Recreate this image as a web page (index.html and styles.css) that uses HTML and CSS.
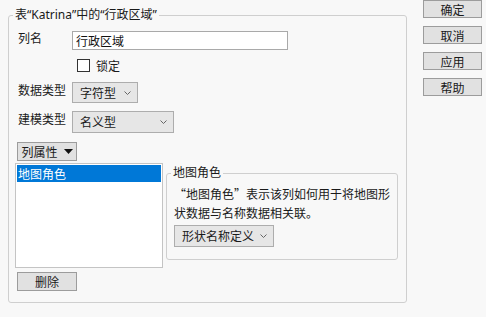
FILE: index.html
```html
<!DOCTYPE html>
<html lang="zh-CN">
<head>
  <meta charset="UTF-8" />
  <title>列信息</title>
  <link rel="stylesheet" href="styles.css">
</head>
<body>
  <div class="dialog">
    <fieldset class="panel">
      <legend class="title">表“Katrina”中的“行政区域”</legend>

      <div class="row row-name">
        <span class="lbl">列名</span>
        <input class="text" value="行政区域" />
      </div>

      <div class="row row-lock">
        <span class="check"></span>
        <span>锁定</span>
      </div>

      <div class="row row-dtype">
        <span class="lbl">数据类型</span>
        <div class="select dtype">
          <span>字符型</span>
          <svg class="chev" width="7" height="4" viewBox="0 0 7 4"><path d="M0.5 0.5 L3.5 3.5 L6.5 0.5" fill="none" stroke="#666" stroke-width="1"/></svg>
        </div>
      </div>

      <div class="row row-mtype">
        <span class="lbl">建模类型</span>
        <div class="select mtype">
          <span>名义型</span>
          <svg class="chev" width="7" height="4" viewBox="0 0 7 4"><path d="M0.5 0.5 L3.5 3.5 L6.5 0.5" fill="none" stroke="#666" stroke-width="1"/></svg>
        </div>
      </div>

      <div class="btn props-btn">
        <span>列属性</span>
        <svg width="9" height="5" viewBox="0 0 9 5"><path d="M0 0 H9 L4.5 5 Z" fill="#111"/></svg>
      </div>

      <div class="props">
        <div class="list">
          <div class="item selected">地图角色</div>
        </div>
        <fieldset class="sub">
          <legend class="title">地图角色</legend>
          <p class="desc">“地图角色”表示该列如何用于将地图形<br>状数据与名称数据相关联。</p>
          <div class="select shape">
            <span>形状名称定义</span>
            <svg class="chev" width="7" height="4" viewBox="0 0 7 4"><path d="M0.5 0.5 L3.5 3.5 L6.5 0.5" fill="none" stroke="#666" stroke-width="1"/></svg>
          </div>
        </fieldset>
      </div>

      <div class="btn del-btn">删除</div>
    </fieldset>

    <div class="actions">
      <div class="btn side">确定</div>
      <div class="btn side">取消</div>
      <div class="btn side">应用</div>
      <div class="btn side">帮助</div>
    </div>
  </div>
</body>
</html>
```

FILE: styles.css
```css
body{margin:0;background:#f8f8f8;font-family:"Noto Sans CJK SC","Noto Sans",sans-serif;font-size:12px;color:#1a1a1a;}
.dialog{display:flex;align-items:flex-start;}

fieldset{margin:0;border:1px solid #cfcfcf;border-radius:3px;min-width:0;}
.title{padding:0 2px;line-height:14px;}

.panel{margin:8px 0 0 8px;width:399px;box-sizing:border-box;height:295px;padding:0 4px 0 4px;display:flex;flex-direction:column;align-items:flex-start;}
.panel .title{font-family:"Noto Sans","Noto Sans CJK SC",sans-serif;}

.row{display:flex;align-items:flex-start;}
.lbl{width:54px;margin-left:5px;line-height:14px;padding-top:1px;}

.row-name{margin-top:9px;height:19px;}
.row-name .lbl{padding-top:0;}
.text{box-sizing:border-box;width:216px;height:19px;margin:0;border:1px solid #a9a9a9;background:#fff;padding:0 3px;font:inherit;color:#111;}

.row-lock{margin-top:9px;margin-left:64px;align-items:center;height:13px;}
.check{width:11px;height:11px;border:1px solid #333;background:#fff;margin-right:6px;}

.row-dtype{margin-top:10px;}
.row-mtype{margin-top:8px;}

.select{box-sizing:border-box;display:flex;align-items:center;justify-content:space-between;border:1px solid #adadad;background:#e6e6e6;padding:0 6px 1px 7px;}
.dtype{width:66px;height:21px;}
.mtype{width:102px;height:22px;}
.shape{width:100px;height:22px;margin:3px 0 0 3px;}
.chev{margin-top:1px;}

.btn{box-sizing:border-box;display:flex;align-items:center;justify-content:center;height:19px;border:1px solid #9c9c9c;background:#e1e1e1;}
.props-btn{margin:9px 0 0 4px;width:60px;gap:6px;}
.del-btn{margin:4px 0 0 4px;width:60px;}

.props{display:flex;align-items:flex-start;margin-top:2px;}
.list{box-sizing:border-box;margin-left:2px;width:148px;height:105px;border:1px solid #c4c4c4;background:#fff;padding:1px;}
.item{line-height:17px;padding-left:1px;}
.selected{background:#0078d7;color:#fff;}

.sub{box-sizing:border-box;margin:3px 0 0 3px;width:232px;height:94px;padding:0 4px 0 4px;}
.desc{margin:4px 0 0 3px;line-height:19px;white-space:nowrap;}

.actions{margin-left:16px;display:flex;flex-direction:column;gap:8px;}
.btn.side{width:59px;height:18px;}
```
